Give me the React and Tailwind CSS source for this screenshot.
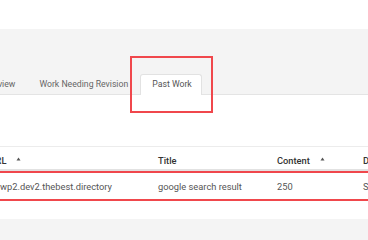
import React from "react";

function SortUp() {
  return (
    <svg width="5" height="4" viewBox="0 0 5 4" className="ml-[10px] mb-[3px]">
      <path d="M2.5 0.5 L4.5 3.5 L0.5 3.5 Z" fill="#555" />
    </svg>
  );
}

export default function App() {
  return (
    <div
      className="relative w-[368px] h-[240px] overflow-hidden bg-white"
      style={{ fontFamily: "Roboto, 'Liberation Sans', sans-serif" }}
    >
      <div className="h-[29px] bg-white" />
      <div className="h-[66px] bg-[#f4f4f4] border-b border-[#e4e4e4] flex items-end">
        <div className="flex items-end -ml-[24px] -mb-px text-[8.7px] text-[#666]">
          <div className="h-[20px] px-[12px] flex items-center">Review</div>
          <div className="h-[20px] px-[12px] flex items-center">Work Needing Revision</div>
          <div className="h-[21px] pl-[11px] pr-[9px] flex items-center bg-white border border-b-0 border-[#e2e2e2] rounded-t-[3px] text-[#555]">
            Past Work
          </div>
        </div>
      </div>
      <div className="h-[51px] bg-white" />
      <div className="border-t border-[#ececec] text-[9.3px]">
        <div className="grid grid-cols-[146px_119px_86px_1fr] h-[24px] items-center pt-[5px] border-b-2 border-[#e2e2e2] font-medium text-[#333]">
          <div className="flex items-center -ml-[10.5px]">
            <span>URL</span>
            <SortUp />
          </div>
          <div className="pl-[12px]">Title</div>
          <div className="pl-[12px] flex items-center">
            <span>Content</span>
            <SortUp />
          </div>
          <div className="pl-[12px]">Date</div>
        </div>
        <div className="grid grid-cols-[146px_119px_86px_1fr] h-[30px] items-center pt-[1px] border-2 border-[#f0474c] -mx-[4px] px-[2px] text-[#555]">
          <div className="whitespace-nowrap">wp2.dev2.thebest.directory</div>
          <div className="pl-[12px] whitespace-nowrap">google search result</div>
          <div className="pl-[12px]">250</div>
          <div className="pl-[12px] whitespace-nowrap">Submitted</div>
        </div>
      </div>
      <div className="h-[18px] bg-white" />
      <div className="h-[30px] bg-[#f4f4f4]" />
      <div className="absolute left-[130px] top-[56px] w-[83px] h-[57px] border-2 border-[#f0474c]" />
    </div>
  );
}
